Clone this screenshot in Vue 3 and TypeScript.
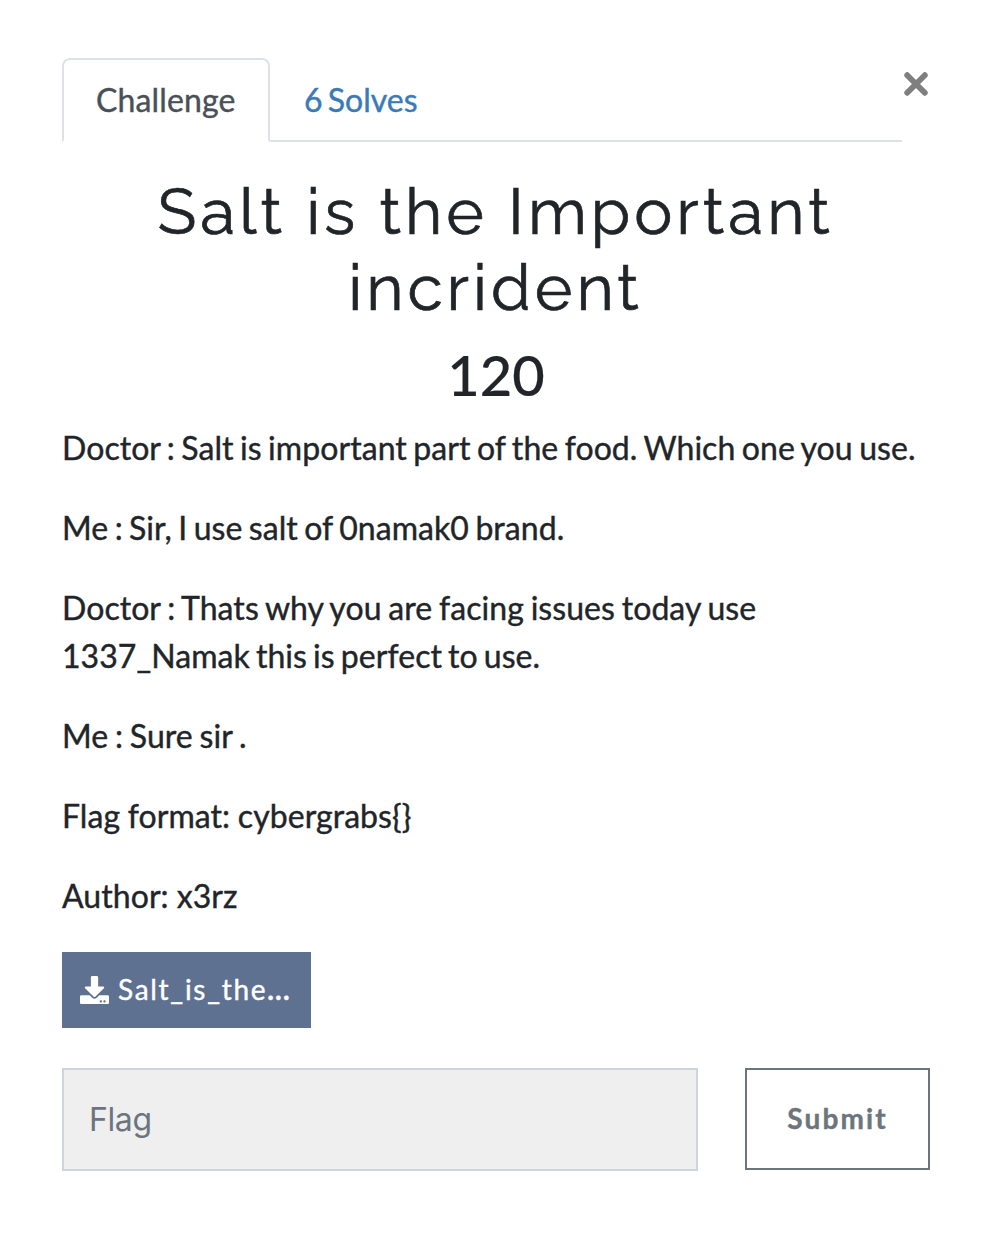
<script setup lang="ts">
interface Line {
  text: string
  gap: number
}

const paragraphs: Line[][] = [
  [{ text: 'Doctor : Salt is important part of the food. Which one you use.', gap: -1.83 }],
  [{ text: 'Me : Sir, I use salt of 0namak0 brand.', gap: -1.85 }],
  [
    { text: 'Doctor : Thats why you are facing issues today use', gap: -1.5 },
    { text: '1337_Namak this is perfect to use.', gap: -2.2 },
  ],
  [{ text: 'Me : Sure sir .', gap: -1.5 }],
  [{ text: 'Flag format: cybergrabs{}', gap: -0.6 }],
  [{ text: 'Author: x3rz', gap: -0.2 }],
]
</script>

<template>
  <main class="modal">
    <header class="top">
      <nav class="tabs">
        <a class="tab active">Challenge</a>
        <a class="tab solves">6 Solves</a>
      </nav>
      <button class="close" aria-label="Close">
        <svg viewBox="0 0 24 24" width="24" height="24">
          <path d="M3.200 3.200L20.800 20.800M20.800 3.200L3.200 20.800" />
          <path class="core" d="M2.800 2.800L21.200 21.200M21.200 2.800L2.800 21.200" />
        </svg>
      </button>
    </header>
    <h2 class="title"><span class="line">Salt is the Important</span><span class="line">incrident</span></h2>
    <h3 class="value">120</h3>
    <section class="desc">
      <p v-for="(p, i) in paragraphs" :key="i">
        <span v-for="(line, j) in p" :key="j" class="row" :style="{ wordSpacing: line.gap + 'px' }">{{ line.text }}</span>
      </p>
    </section>
    <a class="file">
      <svg viewBox="0 0 512 512" width="29" height="28" preserveAspectRatio="none">
        <path fill="#fff" d="M216 0h80c13.300 0 24 10.700 24 24v168h87.700c17.800 0 26.700 21.500 14.100 34.100L269.700 378.300c-7.500 7.500-19.800 7.500-27.300 0L90.100 226.100c-12.600-12.600-3.700-34.100 14.100-34.100H192V24c0-13.300 10.700-24 24-24zm296 376v112c0 13.300-10.700 24-24 24H24c-13.300 0-24-10.700-24-24V376c0-13.300 10.700-24 24-24h146.700l49 49c20.100 20.100 52.500 20.100 72.600 0l49-49H488c13.300 0 24 10.700 24 24zm-124 88c0-11-9-20-20-20s-20 9-20 20 9 20 20 20 20-9 20-20zm64 0c0-11-9-20-20-20s-20 9-20 20 9 20 20 20 20-9 20-20z" />
      </svg>
      <span>Salt_is_the<b>...</b></span>
    </a>
    <form class="form" @submit.prevent>
      <input class="flag" type="text" placeholder="Flag" />
      <button class="submit">Submit</button>
    </form>
  </main>
</template>

<style>
body {
  background: #fff;
}
</style>

<style scoped>
.modal {
  box-sizing: border-box;
  width: 988px;
  height: 1256px;
  padding: 58px 58px 0 62px;
  font-family: Lato, sans-serif;
  font-size: 32px;
  line-height: 48px;
  color: #212529;
  -webkit-text-stroke: 0.4px currentColor;
}
.top {
  display: flex;
  height: 84px;
}
.tabs {
  box-sizing: border-box;
  display: flex;
  width: 840px;
  height: 84px;
  border-bottom: 2px solid #dee2e6;
}
.tab {
  box-sizing: border-box;
  height: 84px;
  padding: 18px 34px;
  color: #3b7ab8;
}
.solves {
  word-spacing: -3px;
}
.tab.active {
  width: 208px;
  padding: 16px 32px;
  border: 2px solid #dee2e6;
  border-bottom-color: #fff;
  border-radius: 8px 8px 0 0;
  color: #495057;
  letter-spacing: 0.150px;
}
.close {
  display: block;
  width: 24px;
  height: 24px;
  margin: 14px 0 0 2px;
  padding: 0;
  border: 0;
  background: none;
}
.close svg {
  display: block;
}
.close path {
  fill: none;
  stroke: #7f7f7f;
  stroke-width: 5.8;
  stroke-linecap: round;
}
.close .core {
  stroke-width: 3;
  stroke-linecap: square;
}
.title {
  margin: 32px 1px 0 0;
  font-family: Raleway, Inter, sans-serif;
  font-size: 64px;
  font-weight: 400;
  line-height: 76px;
  letter-spacing: 4px;
  text-align: center;
  -webkit-text-stroke: 0.7px currentColor;
}
.line,
.row {
  display: block;
  white-space: nowrap;
}
.value {
  margin: 15px 0 16px;
  font-size: 56px;
  font-weight: 500;
  line-height: 67px;
  text-align: center;
  -webkit-text-stroke: 0.2px currentColor;
}
.desc {
  letter-spacing: 0.060px;
}
.desc p {
  margin: 0 0 32px;
}
.file {
  box-sizing: border-box;
  display: flex;
  align-items: center;
  width: 249px;
  height: 76px;
  padding: 0 18px;
  gap: 9px;
  background: #5e7190;
  color: #fff;
  font-size: 28px;
  letter-spacing: 1.700px;
  white-space: nowrap;
}
.file span {
  margin-top: -3px;
}
.file b {
  letter-spacing: 1.200px;
}
.form {
  display: flex;
  gap: 47px;
  margin-top: 40px;
}
.flag {
  box-sizing: border-box;
  width: 636px;
  height: 103px;
  padding: 0 26px 1px 25px;
  border: 2px solid #ced4da;
  border-radius: 0;
  background: #efefef;
  font-family: Inter, sans-serif;
  font-size: 32px;
  letter-spacing: -0.400px;
  -webkit-text-stroke: 0;
}
.flag::placeholder {
  color: #6c757d;
  opacity: 1;
}
.submit {
  box-sizing: border-box;
  width: 185px;
  height: 102px;
  padding: 0 0 2px;
  border: 2px solid #6c757d;
  background: #fff;
  color: #6c757d;
  font: 700 28px Lato, sans-serif;
  letter-spacing: 2.100px;
  -webkit-text-stroke: 0.4px currentColor;
}
</style>
